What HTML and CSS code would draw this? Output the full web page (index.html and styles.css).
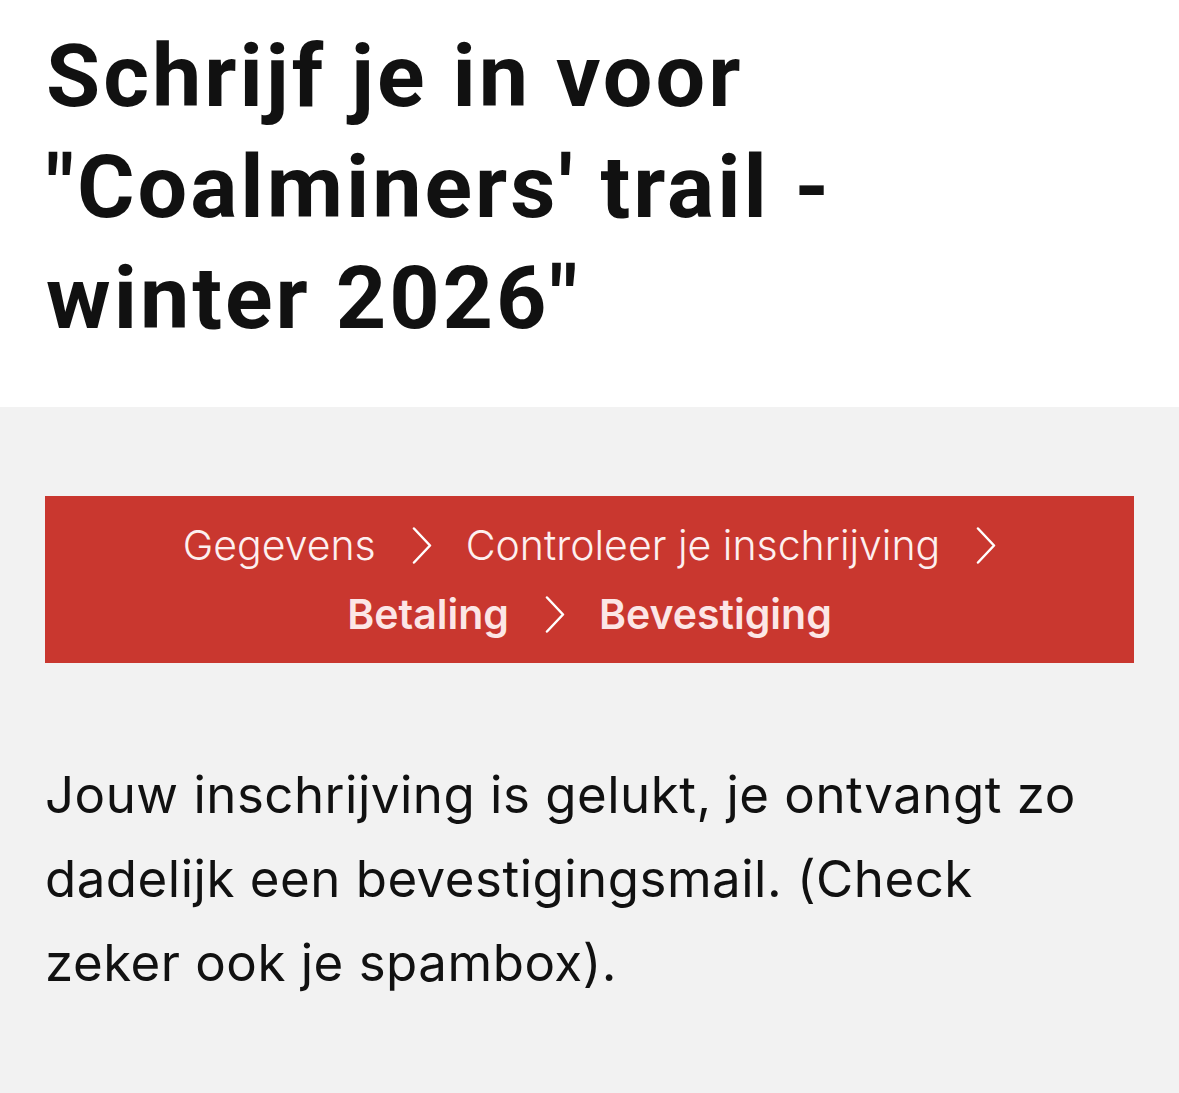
FILE: index.html
```html
<!DOCTYPE html>
<html lang="nl">
<head>
<meta charset="utf-8">
<title>Inschrijving</title>
<link rel="stylesheet" href="styles.css">
</head>
<body>
<header class="page-head">
  <h1 class="title">Schrijf je in voor "Coalminers' trail - winter 2026"</h1>
</header>
<main class="content">
  <nav class="steps">
    <span class="step">Gegevens<svg class="chev" viewBox="0 0 20 37"><polyline points="2,1.5 18,18.5 2,35.5"/></svg></span>
    <span class="step">Controleer je inschrijving<svg class="chev" viewBox="0 0 20 37"><polyline points="2,1.5 18,18.5 2,35.5"/></svg></span>
    <span class="step active">Betaling<svg class="chev" viewBox="0 0 20 37"><polyline points="2,1.5 18,18.5 2,35.5"/></svg></span>
    <span class="step active">Bevestiging</span>
  </nav>
  <p class="message">Jouw inschrijving is gelukt, je ontvangt zo dadelijk een bevestigingsmail. (Check zeker ook je spambox).</p>
</main>
</body>
</html>
```

FILE: styles.css
```css
html, body {
  margin: 0;
  padding: 0;
}
body {
  min-height: 1093px;
  display: flex;
  flex-direction: column;
  background: #f2f2f2;
}
.page-head {
  background: #ffffff;
  padding: 20px 46px 54px 46px;
}
.title {
  margin: 0;
  font-family: Roboto, "Liberation Sans", sans-serif;
  font-weight: 700;
  font-size: 88px;
  letter-spacing: 3px;
  line-height: 111px;
  color: #111111;
  max-width: 900px;
}
.content {
  flex: 1;
  background: #f2f2f2;
  padding: 89px 45px 40px 45px;
}
.steps {
  background: #c9372f;
  padding: 14.5px 30px;
  display: flex;
  flex-wrap: wrap;
  justify-content: center;
  column-gap: 34px;
  font-family: Inter, "Open Sans", sans-serif;
  font-size: 41px;
  font-weight: 300;
  line-height: 69px;
  color: #fdf0f0;
}
.step {
  display: flex;
  align-items: center;
  gap: 36px;
}
.step.active {
  font-weight: 600;
  color: #fce6e6;
}
.chev {
  width: 20px;
  height: 37px;
  fill: none;
  stroke: #ffffff;
  stroke-width: 2.5;
  stroke-linecap: round;
  stroke-linejoin: round;
}
.message {
  margin: 90px 0 0 0;
  font-family: Inter, "Open Sans", sans-serif;
  font-size: 51px;
  letter-spacing: 0.5px;
  line-height: 84px;
  color: #111111;
  max-width: 1070px;
}
```
